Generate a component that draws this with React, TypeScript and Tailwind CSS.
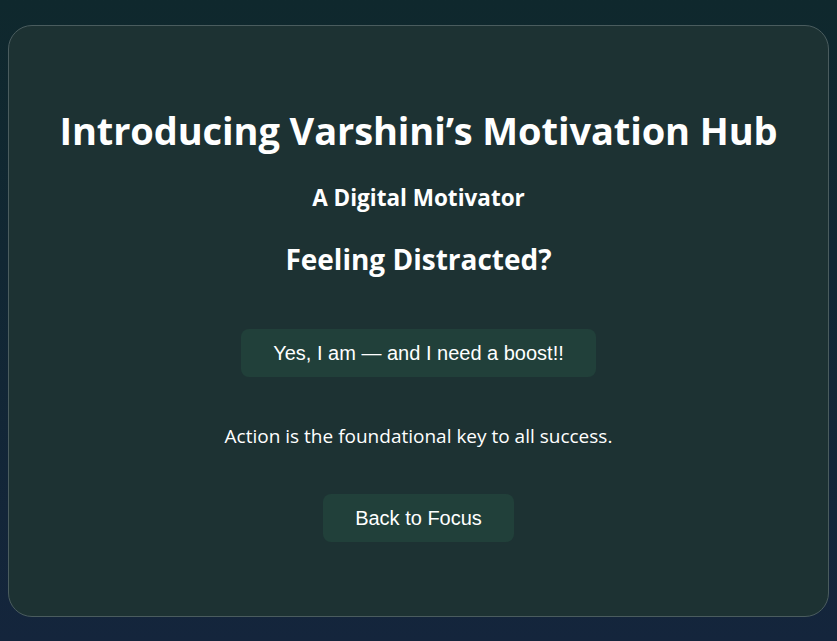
import React from "react";

export default function App() {
  const sans = { fontFamily: '"Open Sans", "Noto Sans", sans-serif' };
  return (
    <div className="min-h-screen w-full flex items-center justify-center px-2 bg-gradient-to-b from-[#0f282d] to-[#14253c]">
      <div
        className="w-full rounded-[24px] border border-[#4a5c5e] bg-[#1d3233] flex flex-col items-center pt-[80px] pb-[74px] text-white"
        style={sans}
      >
        <h1 className="text-[38px] leading-[48px] font-bold tracking-[-0.1px]">Introducing Varshini’s Motivation Hub</h1>
        <h3 className="mt-[30px] text-[22.5px] leading-[28px] font-bold">A Digital Motivator</h3>
        <h2 className="mt-[29px] text-[28px] leading-[36px] font-bold">Feeling Distracted?</h2>
        <button
          className="mt-[52px] h-[48px] px-8 rounded-[8px] bg-[#21403a] text-[20px] leading-[24px] text-white"
          style={{ fontFamily: '"Liberation Sans", Arial, sans-serif' }}
        >
          Yes, I am — and I need a boost!!
        </button>
        <p className="mt-[47px] text-[19px] leading-[24px]">Action is the foundational key to all success.</p>
        <button
          className="mt-[46px] h-[48px] px-8 rounded-[8px] bg-[#21403a] text-[20px] leading-[24px] text-white"
          style={{ fontFamily: '"Liberation Sans", Arial, sans-serif' }}
        >
          Back to Focus
        </button>
      </div>
    </div>
  );
}
